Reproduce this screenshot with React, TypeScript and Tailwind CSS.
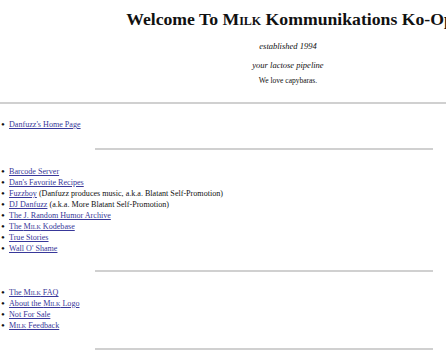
import React from 'react';

// small-caps "Milk" as used throughout the page
const Milk = () => <span className="[font-variant:small-caps]">Milk</span>;

const Bullet: React.FC<{ children: React.ReactNode }> = ({ children }) => (
  <li className="flex h-[11px] items-center leading-[11px]">
    <span className="w-[9px] pl-[1px] text-[11px] leading-[11px]">•</span>
    <span className="whitespace-nowrap">{children}</span>
  </li>
);

const A: React.FC<{ children: React.ReactNode }> = ({ children }) => (
  <a href="#" className="text-[#38389a] underline decoration-[#38389a]">
    {children}
  </a>
);

const Rule = () => <div className="ml-[95px] w-[338px] border-t-2 border-[#d0d0d0]" />;

const App: React.FC = () => {
  return (
    <div className="h-[356px] w-[446px] overflow-hidden bg-white font-['Liberation_Serif',serif] text-[#111]">
      <div className="w-[576px]">
        <h1 className="ml-[4px] mt-[8px] h-[22px] whitespace-nowrap text-center text-[17.7px] font-bold leading-[22px]">
          Welcome To <Milk /> Kommunikations Ko-Op
        </h1>
        <p className="mt-[10px] text-center text-[8.5px] italic leading-[12px]">established 1994</p>
        <p className="mt-[7px] text-center text-[8.5px] italic leading-[12px]">your lactose pipeline</p>
        <p className="mt-[5px] text-center text-[7.5px] leading-[10px]">We love capybaras.</p>
      </div>

      <div className="mt-[16px] border-t-2 border-[#d0d0d0]" />

      <div className="text-[8.1px]">
        <ul className="mt-[15px]">
          <Bullet><A>Danfuzz's Home Page</A></Bullet>
        </ul>

        <div className="mt-[18px]"><Rule /></div>

        <ul className="mt-[16px]">
          <Bullet><A>Barcode Server</A></Bullet>
          <Bullet><A>Dan's Favorite Recipes</A></Bullet>
          <Bullet><A>Fuzzboy</A>&nbsp;(Danfuzz produces music, a.k.a. Blatant Self-Promotion)</Bullet>
          <Bullet><A>DJ Danfuzz</A>&nbsp;(a.k.a. More Blatant Self-Promotion)</Bullet>
          <Bullet><A>The J. Random Humor Archive</A></Bullet>
          <Bullet><A>The <Milk /> Kodebase</A></Bullet>
          <Bullet><A>True Stories</A></Bullet>
          <Bullet><A>Wall O' Shame</A></Bullet>
        </ul>

        <div className="mt-[16px]"><Rule /></div>

        <ul className="mt-[15px]">
          <Bullet><A>The <Milk /> FAQ</A></Bullet>
          <Bullet><A>About the <Milk /> Logo</A></Bullet>
          <Bullet><A>Not For Sale</A></Bullet>
          <Bullet><A><Milk /> Feedback</A></Bullet>
        </ul>

        <div className="mt-[17px]"><Rule /></div>
      </div>
    </div>
  );
};

export default App;
